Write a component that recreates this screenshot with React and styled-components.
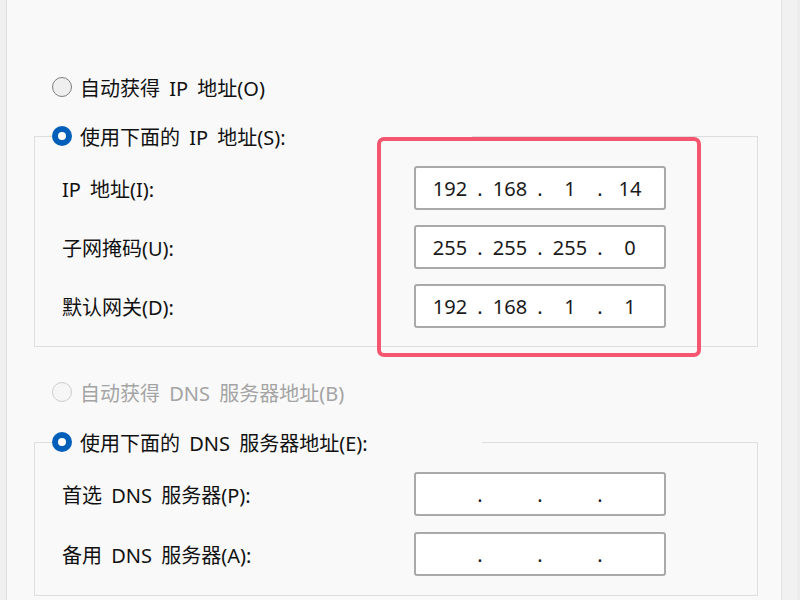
import React from "react";
import styled, { createGlobalStyle } from "styled-components";

const Global = createGlobalStyle`
  html, body { margin: 0; padding: 0; background: #f9f9f9; }
  #root { width: 800px; height: 600px; overflow: hidden; }
  * { box-sizing: border-box; }
`;

const Page = styled.div`
  position: relative;
  width: 800px;
  height: 600px;
  display: flex;
  background: #f9f9f9;
  font-family: "Noto Sans", "Noto Sans CJK SC", sans-serif;
  font-size: 20px;
  word-spacing: 4px;
  color: #111111;
`;

const LeftEdge = styled.div`
  width: 7px;
  flex: none;
  background: #efefef;
  border-right: 1px solid #dddddd;
`;

const RightEdge = styled.div`
  width: 19px;
  flex: none;
  background: #f1f1f1;
  border-left: 1px solid #e2e2e2;
  box-shadow: inset -3px 0 0 #ececec;
`;

const Content = styled.div`
  flex: 1;
  padding: 75px 23px 0 27px;
  display: flex;
  flex-direction: column;
`;

const RadioRow = styled.div`
  height: 24px;
  display: flex;
  align-items: center;
  gap: 8px;
  margin-left: 18px;
  margin-top: ${(p) => p.$top || 0}px;
  color: ${(p) => (p.$disabled ? "#a4a4a4" : "#111111")};
  white-space: nowrap;
`;

const RadioCircle = styled.span`
  width: 20px;
  height: 20px;
  flex: none;
  border-radius: 50%;
  display: flex;
  align-items: center;
  justify-content: center;
  background: ${(p) => (p.$checked ? "#005fb8" : p.$disabled ? "#f6f6f6" : "#efefef")};
  border: ${(p) =>
    p.$checked ? "none" : p.$disabled ? "1.5px solid #cdcdcd" : "1.5px solid #7d7d7d"};
  &::after {
    content: "";
    display: ${(p) => (p.$checked ? "block" : "none")};
    width: 8px;
    height: 8px;
    border-radius: 50%;
    background: #ffffff;
  }
`;

const Group = styled.div`
  border: 1px solid #dedede;
  margin-top: ${(p) => p.$top}px;
  padding: 0 0 ${(p) => p.$bottom}px 27px;
  display: flex;
  flex-direction: column;
`;

const Caption = styled(RadioRow)`
  margin-top: -13px;
  margin-left: -10px;
  width: ${(p) => p.$width}px;
  background: #f9f9f9;
`;

const Rows = styled.div`
  margin-top: ${(p) => p.$top}px;
  display: grid;
  grid-template-columns: 352px 252px;
  row-gap: ${(p) => p.$gap}px;
  align-items: center;
`;

const Label = styled.div`
  white-space: nowrap;
`;

const IpBox = styled.div`
  height: 44px;
  background: #ffffff;
  border: 2px solid #a9a9a9;
  border-radius: 3px;
  display: flex;
  align-items: center;
  padding-left: 9px;
  word-spacing: 0;
  color: #1a1a1a;
`;

const Octet = styled.span`
  width: 50px;
  text-align: center;
`;

const Dot = styled.span`
  width: 10px;
  text-align: center;
`;

const Highlight = styled.div`
  position: absolute;
  left: 377px;
  top: 137px;
  width: 324px;
  height: 220px;
  border: 4px solid #f4566f;
  border-radius: 7px;
  pointer-events: none;
`;

function Radio({ checked, disabled, children, as: Comp = RadioRow, ...rest }) {
  return (
    <Comp $disabled={disabled} {...rest}>
      <RadioCircle $checked={checked} $disabled={disabled} />
      <span>{children}</span>
    </Comp>
  );
}

function IpField({ value }) {
  const parts = value ? value.split(".") : ["", "", "", ""];
  return (
    <IpBox>
      {parts.map((p, i) => (
        <React.Fragment key={i}>
          <Octet>{p}</Octet>
          {i < 3 && <Dot>.</Dot>}
        </React.Fragment>
      ))}
    </IpBox>
  );
}

export default function App() {
  return (
    <>
      <Global />
      <Page>
        <LeftEdge />
        <Content>
          <Radio>自动获得 IP 地址(O)</Radio>
          <Group $top={37} $bottom={18}>
            <Radio as={Caption} $width={420} checked>
              使用下面的 IP 地址(S):
            </Radio>
            <Rows $top={18} $gap={15}>
              <Label>IP 地址(I):</Label>
              <IpField value="192.168.1.14" />
              <Label>子网掩码(U):</Label>
              <IpField value="255.255.255.0" />
              <Label>默认网关(D):</Label>
              <IpField value="192.168.1.1" />
            </Rows>
          </Group>
          <Radio disabled $top={33}>
            自动获得 DNS 服务器地址(B)
          </Radio>
          <Group $top={38} $bottom={19}>
            <Radio as={Caption} $width={430} checked>
              使用下面的 DNS 服务器地址(E):
            </Radio>
            <Rows $top={18} $gap={16}>
              <Label>首选 DNS 服务器(P):</Label>
              <IpField />
              <Label>备用 DNS 服务器(A):</Label>
              <IpField />
            </Rows>
          </Group>
        </Content>
        <RightEdge />
        <Highlight />
      </Page>
    </>
  );
}
